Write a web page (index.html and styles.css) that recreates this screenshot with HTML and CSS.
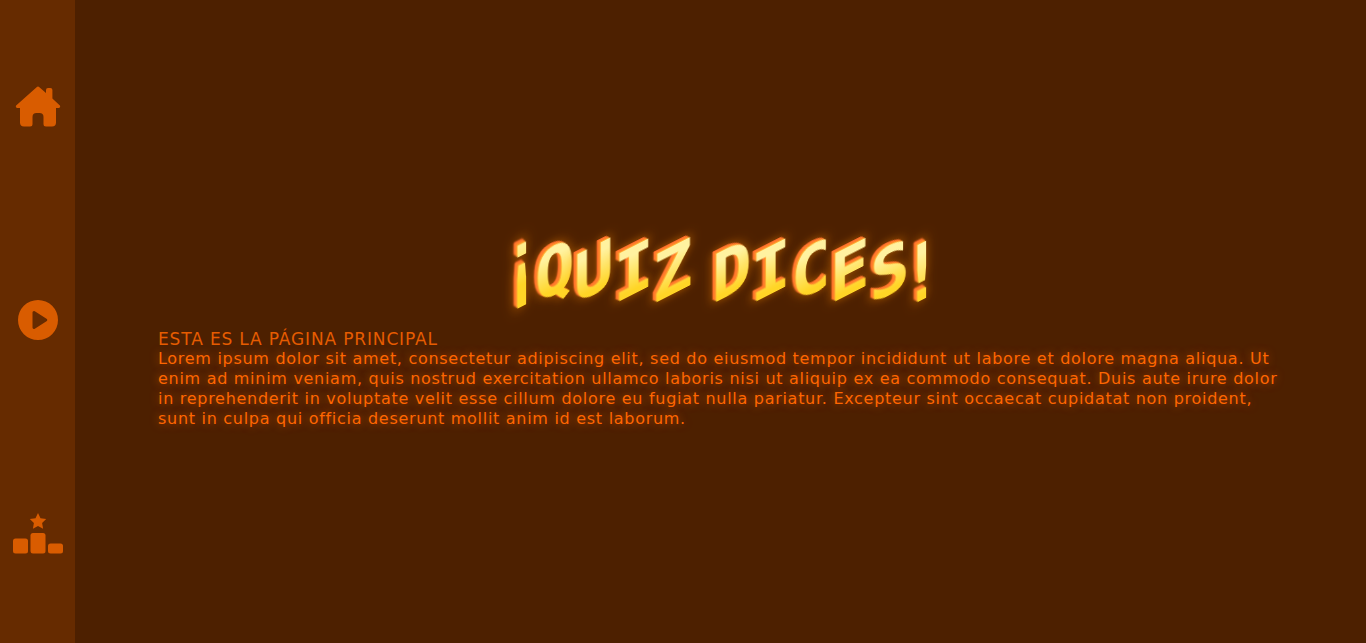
FILE: index.html
```html
<!DOCTYPE html>
<html lang="es">
<head>
    <meta charset="UTF-8">
    <meta name="viewport" content="width=device-width, initial-scale=1.0">
    <title>Quiz Dices</title>
    <link rel="stylesheet" href="styles.css">
</head>
<body>

    <nav class="sidebar">
        <a class="nav-link" href="#">
            <svg class="nav-icon" width="46" height="42" viewBox="0 0 46 42">
                <path d="M21.6 1.2 a2 2 0 0 1 2.8 0 L31 7 V4 a2 2 0 0 1 2-2 h2.4 a2 2 0 0 1 2 2 V12.6 L44.600 19.200 a1.600 1.600 0 0 1 -1 2.800 H41 V36.500 a4 4 0 0 1 -4 4 H31 a2.500 2.500 0 0 1 -2.500 -2.500 V31 a4 4 0 0 0 -4 -4 H21.500 a4 4 0 0 0 -4 4 V38 a2.500 2.500 0 0 1 -2.500 2.500 H9 a4 4 0 0 1 -4 -4 V22 H2.400 a1.600 1.600 0 0 1 -1 -2.800 Z"/>
            </svg>
        </a>
        <a class="nav-link" href="#">
            <svg class="nav-icon" width="40" height="40" viewBox="0 0 40 40">
                <path fill-rule="evenodd" d="M20 0 a20 20 0 1 0 0 40 a20 20 0 1 0 0 -40 Z M14.500 12.500 a1.500 1.500 0 0 1 2.300 -1.300 L28.500 18.700 a1.500 1.500 0 0 1 0 2.600 L16.800 28.800 a1.500 1.500 0 0 1 -2.300 -1.300 Z"/>
            </svg>
        </a>
        <a class="nav-link" href="#">
            <svg class="nav-icon" width="52" height="42" viewBox="0 0 52 42">
                <path d="M26 0 l2.500 5.300 5.700 .8 -4.100 4 1 5.700 -5.100 -2.700 -5.100 2.700 1 -5.700 -4.100 -4 5.700 -.8 Z"/>
                <rect x="1" y="25.500" width="15" height="15" rx="2.500"/>
                <rect x="18.500" y="20" width="15" height="20.500" rx="2.500"/>
                <rect x="36" y="30.500" width="15" height="10" rx="2.500"/>
            </svg>
        </a>
    </nav>

    <main class="content">
        <h1 class="logo">
            <span class="word">
                <span class="ltr open-mark">¡</span><span class="ltr">Q</span><span class="ltr">U</span><span class="ltr">I</span><span class="ltr">Z</span>
            </span>
            <span class="word">
                <span class="ltr">D</span><span class="ltr">I</span><span class="ltr">C</span><span class="ltr">E</span><span class="ltr">S</span><span class="ltr close-mark">!</span>
            </span>
        </h1>
        <div class="intro">
            <h2>ESTA ES LA PÁGINA PRINCIPAL</h2>
            <p>Lorem ipsum dolor sit amet, consectetur adipiscing elit, sed do eiusmod tempor incididunt ut labore et dolore magna aliqua. Ut enim ad minim veniam, quis nostrud exercitation ullamco laboris nisi ut aliquip ex ea commodo consequat. Duis aute irure dolor in reprehenderit in voluptate velit esse cillum dolore eu fugiat nulla pariatur. Excepteur sint occaecat cupidatat non proident, sunt in culpa qui officia deserunt mollit anim id est laborum.</p>
        </div>
    </main>

</body>
</html>
```

FILE: styles.css
```css
* {
    box-sizing: border-box;
}

body {
    margin: 0;
    height: 100vh;
    display: flex;
    overflow: hidden;
    background: #4d2000;
    font-family: "DejaVu Sans", sans-serif;
}

/* Sidebar */
.sidebar {
    width: 75px;
    flex-shrink: 0;
    padding-bottom: 2px;
    background: #662b00;
    display: flex;
    flex-direction: column;
    justify-content: space-around;
    align-items: center;
}

.nav-link {
    display: flex;
}

.nav-icon {
    fill: #d95c00;
}

/* Main */
.content {
    flex: 1;
    display: flex;
    flex-direction: column;
    justify-content: center;
    padding: 22px 80px 0 83px;
}

/* Title */
.logo {
    margin: 0 0 22px;
    display: flex;
    justify-content: center;
    gap: 19px;
    font-family: "DejaVu Sans Mono", monospace;
    font-size: 66px;
    font-weight: bold;
    line-height: 70px;
}

.word {
    display: flex;
}

.ltr {
    width: 39.500px;
    text-align: center;
    transform: skewY(-27deg);
    background: linear-gradient(to bottom, #fff2a0 25%, #ffd526 75%);
    -webkit-background-clip: text;
    background-clip: text;
    color: transparent;
    filter: drop-shadow(-1px -0.7px 0 #ffb030) drop-shadow(-2px -1.400px 0 #ff7f2a) drop-shadow(-1px -0.7px 0 #ff6a2a) drop-shadow(0 0 5px rgba(255, 140, 0, 0.5));
}

.open-mark {
    margin: 0 -7px 0 -10px;
    transform: translateY(-10px) skewY(-27deg) scaleY(1.3);
}

.close-mark {
    margin: 0 -10px 0 -7px;
    transform: translateY(2px) skewY(-27deg) scaleY(1.2);
}

/* Text */
.intro {
    color: #ff6600;
    font-size: 16px;
    line-height: 20px;
}

.intro h2 {
    margin: 0;
    font-size: 17px;
    font-weight: normal;
    letter-spacing: 0.850px;
    color: #e65c00;
}

.intro p {
    margin: 0;
    letter-spacing: 0.710px;
    text-shadow: 0 0 8px rgba(255, 102, 0, 0.6);
}
```
